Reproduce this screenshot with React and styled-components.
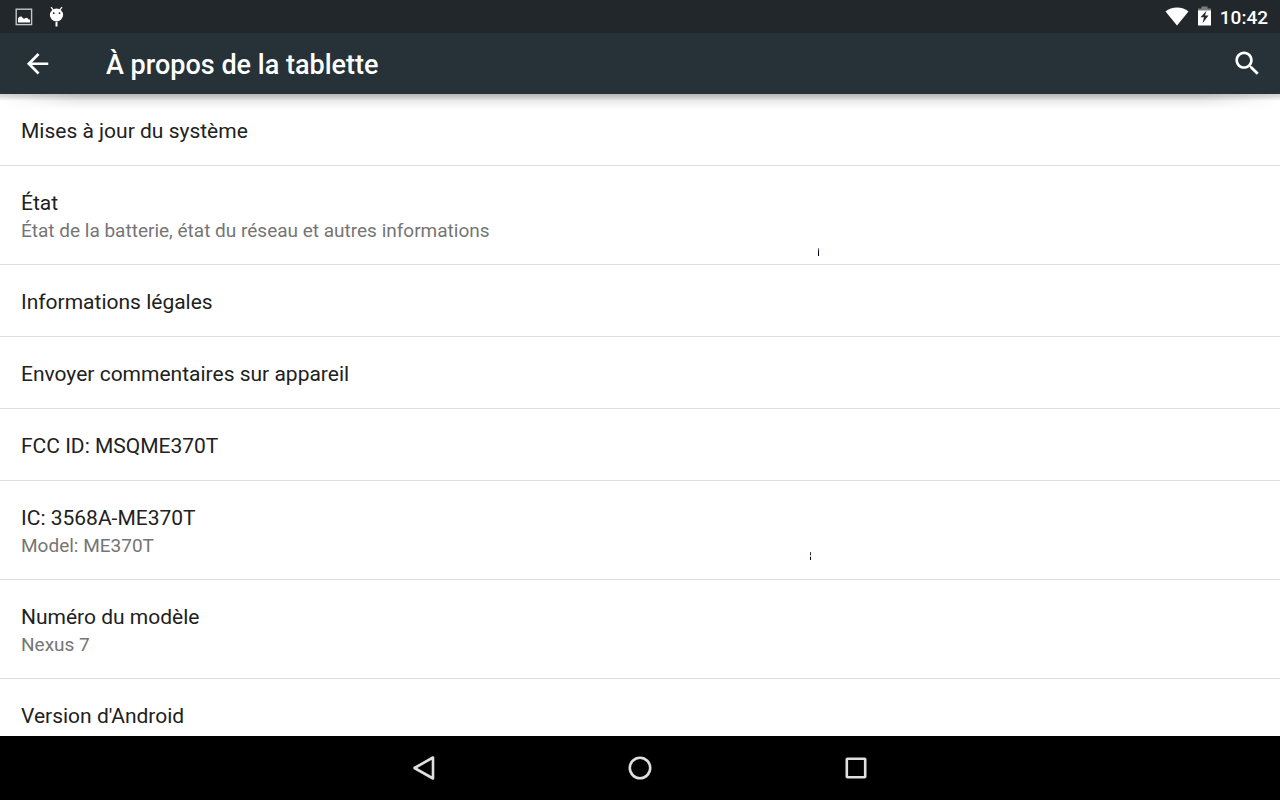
import React from "react";
import styled, { createGlobalStyle } from "styled-components";

const GlobalStyle = createGlobalStyle`
  *, *::before, *::after { box-sizing: border-box; }
  body { margin: 0; background: #fff; font-family: Roboto, "Noto Sans", sans-serif; }
`;

const Screen = styled.div`
  display: flex;
  flex-direction: column;
  height: 100vh;
  overflow: hidden;
`;

const StatusBar = styled.div`
  display: flex;
  flex: none;
  justify-content: space-between;
  align-items: center;
  height: 33px;
  padding: 0 12px 0 15px;
  background: #21272b;
  color: #fff;
`;

const StatusGroup = styled.div`
  display: flex;
  align-items: center;
  gap: ${(p) => p.$gap}px;
`;

const Icon = styled.svg`
  display: block;
  flex: none;
`;

const Clock = styled.time`
  padding-top: 2px;
  font-size: 19px;
  line-height: 31px;
  font-weight: 500;
`;

const AppBar = styled.header`
  position: relative;
  z-index: 1;
  display: flex;
  flex: none;
  align-items: center;
  height: 61px;
  padding: 0 15px 0 20px;
  background: #263238;
  color: #fff;

  &::before,
  &::after {
    content: "";
    position: absolute;
    top: 100%;
    left: 0;
    right: 0;
    pointer-events: none;
  }

  &::before {
    height: 7px;
    background: linear-gradient(rgba(0, 0, 0, 0.18), rgba(0, 0, 0, 0.12) 3px, transparent);
  }

  &::after {
    height: 16px;
    background: linear-gradient(rgba(0, 0, 0, 0.12), rgba(0, 0, 0, 0.09) 5px, transparent);
    mask-image: linear-gradient(to right, transparent, #000 80px, #000 calc(100% - 80px), transparent);
  }
`;

const IconButton = styled.button`
  display: flex;
  align-items: center;
  justify-content: center;
  width: ${(p) => p.$size}px;
  height: ${(p) => p.$size}px;
  padding: 0;
  border: 0;
  background: none;
  color: inherit;
  cursor: pointer;
`;

const Title = styled.h1`
  flex: 1;
  margin: 0 0 0 50px;
  padding-top: 2px;
  font-size: 27px;
  line-height: 36px;
  font-weight: 500;
`;

const List = styled.ul`
  flex: 1;
  min-height: 0;
  margin: 0;
  padding: 0;
  overflow: hidden;
  list-style: none;
`;

const Item = styled.li`
  position: relative;
  border-bottom: 1px solid #dedede;
`;

const Row = styled.button`
  display: flex;
  flex-direction: column;
  width: 100%;
  min-height: 71px;
  padding: 23px 21px 19px;
  border: 0;
  background: none;
  font-family: inherit;
  text-align: left;
  cursor: pointer;
`;

const Label = styled.span`
  font-size: 21px;
  line-height: 28px;
  color: #212121;
`;

const Summary = styled.span`
  font-size: 19px;
  line-height: 28px;
  color: #757575;
`;

const Speck = styled.span`
  position: absolute;
  left: ${(p) => p.$left}px;
  bottom: ${(p) => p.$bottom}px;
  width: 1px;
  height: 8px;
  background: linear-gradient(${(p) => p.$colors});
`;

const NavBar = styled.nav`
  display: flex;
  flex: none;
  justify-content: center;
  align-items: center;
  gap: 152px;
  height: 64px;
  background: #000;
  color: #e0e0e0;
`;

const items = [
  { label: "Mises à jour du système" },
  {
    label: "État",
    summary: "État de la batterie, état du réseau et autres informations",
    speck: { left: 818, bottom: 8, colors: "#6abf3a 0 1px, #2a35d8 1px 3px, #000 3px" },
  },
  { label: "Informations légales" },
  { label: "Envoyer commentaires sur appareil" },
  { label: "FCC ID: MSQME370T" },
  {
    label: "IC: 3568A-ME370T",
    summary: "Model: ME370T",
    speck: { left: 810, bottom: 19, colors: "#7a3048 0 2px, #111 2px 3px, #9fcfa8 3px 5px, #000 5px" },
  },
  { label: "Numéro du modèle", summary: "Nexus 7" },
  { label: "Version d'Android" },
];

export default function App() {
  return (
    <>
      <GlobalStyle />
      <Screen>
        <StatusBar>
          <StatusGroup $gap={16}>
            <Icon width="18" height="18" viewBox="0 0 18 18" aria-hidden="true">
              <rect x="1.2" y="1.2" width="15.4" height="15.4" fill="none" stroke="#c4c7c9" strokeWidth="1.4" />
              <path d="M3 14.4V10.2L4.6 8.8 6.6 8.6 8 10.2 9.2 10.8 11 9.8 12.5 10 13.5 11.5H15V14.4Z" fill="#fff" />
            </Icon>
            <Icon width="15" height="21" viewBox="0 0 15 21" aria-hidden="true">
              <ellipse cx="7.5" cy="9" rx="6.6" ry="6.4" fill="#fff" />
              <path d="M2 1.2 4.3 4M13 1.2 10.7 4" stroke="#fff" strokeWidth="1.2" />
              <path d="M7.5 16V20.5" stroke="#fff" strokeWidth="2" />
              <circle cx="4.7" cy="7.2" r="0.9" fill="#21272b" />
              <circle cx="10.5" cy="7.2" r="0.9" fill="#21272b" />
            </Icon>
          </StatusGroup>
          <StatusGroup $gap={9}>
            <Icon width="24" height="19" viewBox="0 0 24 19" aria-hidden="true">
              <path d="M0.5 4.4C3.6 2 7.6 0.6 12 0.6S20.4 2 23.5 4.4L12 18.6Z" fill="#fff" />
            </Icon>
            <Icon width="13" height="22" viewBox="0 0 13 22" aria-hidden="true">
              <path d="M3.5 0.5H9.5V2.5H13V5H0V2.5H3.5Z" fill="#7a7d80" />
              <path d="M0 4.5H13V19.5H0Z" fill="#fff" />
              <path d="M8.5 4.8 2.5 11.2H6L4.5 17.2 10.5 9.4H7Z" fill="#21272b" />
            </Icon>
            <Clock>10:42</Clock>
          </StatusGroup>
        </StatusBar>

        <AppBar>
          <IconButton $size={36} type="button" aria-label="Retour">
            <Icon width="32" height="32" viewBox="0.3 0.2 24 24" aria-hidden="true">
              <path d="M20 11H7.83l5.59-5.59L12 4l-8 8 8 8 1.41-1.41L7.83 13H20v-2z" fill="#fff" />
            </Icon>
          </IconButton>
          <Title>À propos de la tablette</Title>
          <IconButton $size={36} type="button" aria-label="Rechercher">
            <Icon width="32" height="32" viewBox="-0.3 0.4 24 24" aria-hidden="true">
              <path
                d="M15.5 14h-.79l-.28-.27C15.41 12.59 16 11.11 16 9.5 16 5.91 13.09 3 9.5 3S3 5.91 3 9.5 5.91 16 9.5 16c1.61 0 3.09-.59 4.23-1.57l.27.28v.79l5 4.99L20.49 19l-4.99-5zm-6 0C7.01 14 5 11.99 5 9.5S7.01 5 9.5 5 14 7.01 14 9.5 11.99 14 9.5 14z"
                fill="#fff"
              />
            </Icon>
          </IconButton>
        </AppBar>

        <List>
          {items.map(({ label, summary, speck }) => (
            <Item key={label}>
              <Row type="button">
                <Label>{label}</Label>
                {summary && <Summary>{summary}</Summary>}
              </Row>
              {speck && <Speck $left={speck.left} $bottom={speck.bottom} $colors={speck.colors} />}
            </Item>
          ))}
        </List>

        <NavBar>
          <IconButton $size={64} type="button" aria-label="Précédent">
            <Icon width="32" height="32" viewBox="0 0 32 32" aria-hidden="true">
              <path d="M25 5.5V26.5L6.5 16Z" fill="none" stroke="currentColor" strokeWidth="2.6" strokeLinejoin="round" />
            </Icon>
          </IconButton>
          <IconButton $size={64} type="button" aria-label="Accueil">
            <Icon width="32" height="32" viewBox="0 0 32 32" aria-hidden="true">
              <circle cx="16" cy="16" r="10.2" fill="none" stroke="currentColor" strokeWidth="2.6" />
            </Icon>
          </IconButton>
          <IconButton $size={64} type="button" aria-label="Applications récentes">
            <Icon width="32" height="32" viewBox="0 0 32 32" aria-hidden="true">
              <rect x="6.8" y="6.8" width="18.4" height="18.4" rx="0.5" fill="none" stroke="currentColor" strokeWidth="2.6" />
            </Icon>
          </IconButton>
        </NavBar>
      </Screen>
    </>
  );
}
